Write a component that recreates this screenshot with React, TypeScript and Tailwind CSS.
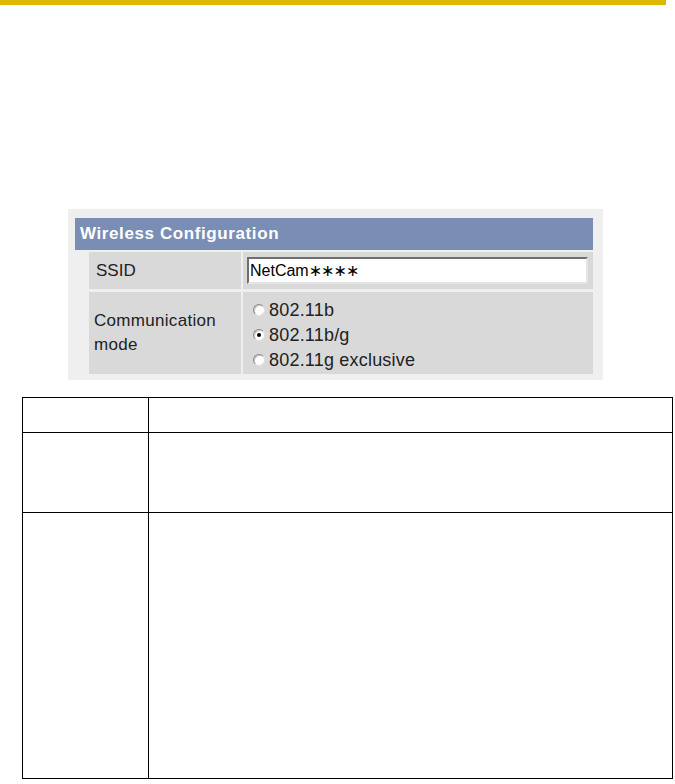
import React from "react";

function Radio({ checked }: { checked?: boolean }) {
  return (
    <span className="relative inline-block w-[12px] h-[12px] rounded-full bg-white border border-t-[#8a8a8a] border-l-[#8a8a8a] border-b-[#e0e0e0] border-r-[#e0e0e0] mr-[4px] shadow-[inset_1px_1px_0_#c8c8c8]">
      {checked && (
        <span className="absolute left-[3px] top-[3px] w-[4px] h-[4px] rounded-full bg-black" />
      )}
    </span>
  );
}

export default function App() {
  return (
    <div className="relative w-[675px] h-[784px] bg-white overflow-hidden" style={{ fontFamily: '"Liberation Sans", Arial, sans-serif' }}>
      <div className="w-[666px] h-[5px] bg-[#dfb700]" />
      <div className="flex flex-col">
        <div className="ml-[68px] mt-[204px] w-[535px] bg-[#efefef] pl-[7px] pr-[10px] pt-[9px] pb-[6px]">
          <div className="h-[32px] bg-[#7a8db4] flex items-center pl-[5px] text-white font-bold text-[17px] tracking-[0.6px]">
            Wireless Configuration
          </div>
          <div className="pl-[14px] pt-[2px] flex flex-col gap-[3px]">
            <div className="flex gap-[2px] h-[37px]">
              <div className="w-[152px] bg-[#d9d9d9] flex items-center pl-[7px] text-[17px] text-[#222]">SSID</div>
              <div className="flex-1 bg-[#d9d9d9] flex items-center pl-[4px] pr-[5px]">
                <div className="w-full h-[27px] bg-white border-2 border-t-[#6e6e6e] border-l-[#6e6e6e] border-b-[#e4e4e4] border-r-[#e4e4e4] flex items-center pl-[1px] text-[16px] text-black">
                  NetCam<span className="text-[16px] tracking-[-1px]" style={{ fontFamily: '"DejaVu Sans", sans-serif' }}>∗∗∗∗</span>
                </div>
              </div>
            </div>
            <div className="flex gap-[2px] h-[82px]">
              <div className="w-[152px] bg-[#d9d9d9] flex items-center pl-[5px] text-[17px] leading-[24px] text-[#222] tracking-[0.3px]">
                <div>Communication<br />mode</div>
              </div>
              <div className="flex-1 bg-[#d9d9d9] flex flex-col justify-center pl-[10px] pt-[4px] text-[18px] leading-[25px] text-[#222] tracking-[0.2px]">
                <div className="flex items-center"><Radio />802.11b</div>
                <div className="flex items-center"><Radio checked />802.11b/g</div>
                <div className="flex items-center"><Radio />802.11g exclusive</div>
              </div>
            </div>
          </div>
        </div>
        <div className="ml-[22px] mt-[17px] w-[651px] border border-black flex flex-col">
          <div className="flex h-[35px] border-b border-black">
            <div className="w-[126px] border-r border-black" />
            <div className="flex-1" />
          </div>
          <div className="flex h-[80px] border-b border-black">
            <div className="w-[126px] border-r border-black" />
            <div className="flex-1" />
          </div>
          <div className="flex h-[265px]">
            <div className="w-[126px] border-r border-black" />
            <div className="flex-1" />
          </div>
        </div>
      </div>
    </div>
  );
}
